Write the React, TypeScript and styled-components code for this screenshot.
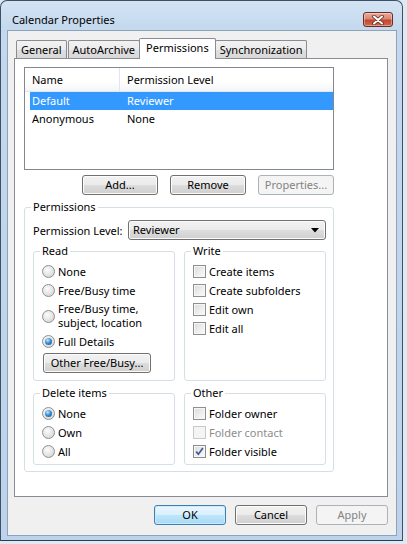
import React from "react";
import styled, { createGlobalStyle, css } from "styled-components";

const Global = createGlobalStyle`
  html, body { margin: 0; padding: 0; }
  body {
    background: #dfe9f4;
    font-family: "Noto Sans", "Open Sans", sans-serif;
    font-size: 11px;
    color: #000;
  }
  * { box-sizing: border-box; }
`;

const Window = styled.div`
  width: 403px;
  height: 541px;
  display: flex;
  flex-direction: column;
  border: 1px solid #3d5064;
  border-bottom-color: #2e3d4d;
  border-radius: 7px 7px 0 0;
  background: linear-gradient(180deg, #d3e3f3 0px, #c3d8ee 30px, #bcd3eb 100%);
  padding: 0 5px 4px 6px;
`;

const TitleBar = styled.div`
  height: 29px;
  flex: none;
  display: flex;
  align-items: center;
  padding: 8px 4px 0 5px;
`;

const Title = styled.div`
  flex: 1;
  font-size: 11px;
  line-height: 14px;
  color: #000;
`;

const CloseButton = styled.div`
  width: 30px;
  height: 15px;
  border: 1px solid #6b2c22;
  border-radius: 3px;
  background: linear-gradient(180deg, #e9a99b 0%, #d98875 45%, #c2452f 55%, #cf6a4f 100%);
  box-shadow: inset 0 0 0 1px rgba(255, 255, 255, 0.35);
  display: flex;
  align-items: center;
  justify-content: center;
`;

const Client = styled.div`
  flex: 1;
  display: flex;
  flex-direction: column;
  background: #f0f0f0;
  border: 1px solid #8ea3ba;
  padding: 7px 8px 10px 6px;
`;

const TabStrip = styled.div`
  display: flex;
  align-items: flex-end;
  height: 21px;
  margin-bottom: -1px;
  padding-left: 2px;
  flex: none;
`;

const Tab = styled.div<{ $active?: boolean }>`
  height: 19px;
  padding: 0 4px;
  margin-right: 1px;
  border: 1px solid #898c95;
  border-bottom: none;
  border-radius: 2px 2px 0 0;
  background: linear-gradient(180deg, #f2f2f2 0%, #ebebeb 50%, #dedede 51%, #d8d8d8 100%);
  line-height: 17px;
  white-space: nowrap;
  ${(p) =>
    p.$active &&
    css`
      height: 21px;
      margin: 0 -1px 0 -2px;
      padding: 0 6px 0 6px;
      background: #ffffff;
      line-height: 18px;
      position: relative;
      z-index: 1;
    `}
`;

const Panel = styled.div`
  flex: 1;
  background: #ffffff;
  border: 1px solid #898c95;
  padding: 8px 9px 0 9px;
  display: flex;
  flex-direction: column;
`;

const ListBox = styled.div`
  width: 310px;
  height: 103px;
  border: 1px solid #828790;
  background: #fff;
  padding-left: 5px;
  flex: none;
`;

const ListHeader = styled.div`
  display: grid;
  grid-template-columns: 90px 1fr;
  height: 24px;
  margin-left: -5px;
  padding-left: 5px;
  background: linear-gradient(180deg, #ffffff 0%, #ffffff 60%, #f4f5f7 100%);
  border-bottom: 1px solid #e3e6ea;
`;

const HeaderCell = styled.div<{ $first?: boolean }>`
  line-height: 23px;
  padding-left: ${(p) => (p.$first ? "2px" : "7px")};
  ${(p) => p.$first && "border-right: 1px solid #e3e5e8;"}
`;

const ListRow = styled.div<{ $selected?: boolean }>`
  display: grid;
  grid-template-columns: 90px 1fr;
  height: 18px;
  line-height: 18px;
  background: ${(p) => (p.$selected ? "#3399ff" : "transparent")};
  color: ${(p) => (p.$selected ? "#ffffff" : "#000000")};
`;

const RowCell = styled.div<{ $first?: boolean }>`
  padding-left: ${(p) => (p.$first ? "2px" : "7px")};
`;

const ButtonRow = styled.div`
  width: 310px;
  display: flex;
  justify-content: flex-end;
  gap: 12px;
  margin-top: 5px;
  flex: none;
`;

const Button = styled.div<{ $w?: number; $disabled?: boolean; $default?: boolean }>`
  width: ${(p) => p.$w ?? 76}px;
  height: 20px;
  border: 1px solid #707070;
  border-radius: 3px;
  background: linear-gradient(180deg, #f2f2f2 0%, #ebebeb 50%, #dddddd 51%, #cfcfcf 100%);
  box-shadow: inset 0 0 0 1px #fcfcfc;
  display: flex;
  align-items: center;
  justify-content: center;
  line-height: 16px;
  color: #000;
  flex: none;
  ${(p) =>
    p.$default &&
    css`
      border-color: #3c7fb1;
      background: linear-gradient(180deg, #eaf6fd 0%, #d9f0fc 50%, #bee6fd 51%, #a7d9f5 100%);
      box-shadow: inset 0 0 0 1px #cfeafc;
    `}
  ${(p) =>
    p.$disabled &&
    css`
      border-color: #adb2b5;
      background: #f4f4f4;
      box-shadow: none;
      color: #838383;
    `}
`;

const Group = styled.fieldset`
  margin: 0;
  min-width: 0;
  border: 1px solid #d5dfe5;
  border-radius: 3px;
  padding: 0 7px 6px 8px;
`;

const OuterGroup = styled(Group)`
  width: 310px;
  margin-top: 4px;
  flex: none;
`;

const SubGroup = styled(Group)`
  padding: 3px 6px 3px 8px;
  display: flex;
  flex-direction: column;
`;

const Legend = styled.legend`
  padding: 0 2px;
  margin-left: -2px;
  line-height: 16px;
  font-size: 11px;
`;

const LevelRow = styled.div`
  display: flex;
  align-items: center;
  height: 20px;
  margin-top: 5px;
`;

const Select = styled.div`
  margin-left: auto;
  width: 198px;
  height: 20px;
  border: 1px solid #707070;
  border-radius: 3px;
  background: linear-gradient(180deg, #f2f2f2 0%, #ebebeb 50%, #dddddd 51%, #cfcfcf 100%);
  box-shadow: inset 0 0 0 1px #fcfcfc;
  display: flex;
  align-items: center;
  justify-content: space-between;
  padding: 0 6px 0 4px;
  line-height: 16px;
`;

const SubGrid = styled.div`
  display: grid;
  grid-template-columns: 142px 142px;
  column-gap: 9px;
  row-gap: 4px;
  margin-top: 3px;
`;

const OptionRow = styled.div<{ $tall?: boolean; $disabled?: boolean }>`
  display: flex;
  align-items: center;
  gap: 3px;
  height: ${(p) => (p.$tall ? 32 : 19)}px;
  line-height: ${(p) => (p.$tall ? 14 : 19)}px;
  color: ${(p) => (p.$disabled ? "#8d8d8d" : "#000")};
`;

const RadioCircle = styled.span<{ $on?: boolean }>`
  width: 13px;
  height: 13px;
  border-radius: 50%;
  border: 1px solid #8f9090;
  background: radial-gradient(circle at 40% 35%, #fbfbfb 0%, #e6e6e6 50%, #cdcdcd 100%);
  display: flex;
  align-items: center;
  justify-content: center;
  flex: none;
  &::after {
    content: "";
    display: ${(p) => (p.$on ? "block" : "none")};
    width: 7px;
    height: 7px;
    border-radius: 50%;
    background: radial-gradient(circle at 38% 32%, #c3ecff 0%, #3a8fd6 45%, #0c4a8c 100%);
  }
`;

const CheckBox = styled.span<{ $disabled?: boolean }>`
  width: 13px;
  height: 13px;
  border: 1px solid ${(p) => (p.$disabled ? "#c9c9c9" : "#8e8f8f")};
  background: ${(p) =>
    p.$disabled ? "#f4f4f4" : "linear-gradient(135deg, #dadada 0%, #efefef 60%, #fbfbfb 100%)"};
  box-shadow: inset 0 0 0 1px ${(p) => (p.$disabled ? "#f4f4f4" : "#f6f6f6")};
  display: flex;
  align-items: center;
  justify-content: center;
  flex: none;
`;

const SmallButtonWrap = styled.div`
  margin: 2px 0 4px 1px;
`;

const DialogButtons = styled.div`
  display: flex;
  justify-content: flex-end;
  gap: 9px;
  margin-top: 8px;
  flex: none;
`;

const Radio = ({ on, children, tall }: { on?: boolean; children: React.ReactNode; tall?: boolean }) => (
  <OptionRow $tall={tall}>
    <RadioCircle $on={on} />
    <span>{children}</span>
  </OptionRow>
);

const Check = ({ checked, disabled, children }: { checked?: boolean; disabled?: boolean; children: React.ReactNode }) => (
  <OptionRow $disabled={disabled}>
    <CheckBox $disabled={disabled}>
      {checked && (
        <svg width="9" height="9" viewBox="0 0 9 9">
          <path d="M1.2 4.6 L3.4 7.2 L7.9 1" fill="none" stroke="#3f5a99" strokeWidth="1.7" />
        </svg>
      )}
    </CheckBox>
    <span>{children}</span>
  </OptionRow>
);

export default function App() {
  return (
    <>
      <Global />
      <Window>
        <TitleBar>
          <Title>Calendar Properties</Title>
          <CloseButton>
            <svg width="12" height="10" viewBox="0 0 12 10">
              <path d="M2 1.5 L10 8.5 M10 1.5 L2 8.5" stroke="#5a2a22" strokeWidth="3.6" strokeLinecap="round" />
              <path d="M2 1.5 L10 8.5 M10 1.5 L2 8.5" stroke="#ffffff" strokeWidth="2" strokeLinecap="round" />
            </svg>
          </CloseButton>
        </TitleBar>
        <Client>
          <TabStrip>
            <Tab>General</Tab>
            <Tab>AutoArchive</Tab>
            <Tab $active>Permissions</Tab>
            <Tab>Synchronization</Tab>
          </TabStrip>
          <Panel>
            <ListBox>
              <ListHeader>
                <HeaderCell $first>Name</HeaderCell>
                <HeaderCell>Permission Level</HeaderCell>
              </ListHeader>
              <ListRow $selected>
                <RowCell $first>Default</RowCell>
                <RowCell>Reviewer</RowCell>
              </ListRow>
              <ListRow>
                <RowCell $first>Anonymous</RowCell>
                <RowCell>None</RowCell>
              </ListRow>
            </ListBox>
            <ButtonRow>
              <Button>Add...</Button>
              <Button>Remove</Button>
              <Button $disabled>Properties...</Button>
            </ButtonRow>
            <OuterGroup>
              <Legend>Permissions</Legend>
              <LevelRow>
                <span>Permission Level:</span>
                <Select>
                  <span>Reviewer</span>
                  <svg width="8" height="5" viewBox="0 0 8 5">
                    <path d="M0 0 H8 L4 4.5 Z" fill="#000" />
                  </svg>
                </Select>
              </LevelRow>
              <SubGrid>
                <SubGroup>
                  <Legend>Read</Legend>
                  <Radio>None</Radio>
                  <Radio>Free/Busy time</Radio>
                  <Radio tall>
                    Free/Busy time,
                    <br />
                    subject, location
                  </Radio>
                  <Radio on>Full Details</Radio>
                  <SmallButtonWrap>
                    <Button $w={108}>Other Free/Busy...</Button>
                  </SmallButtonWrap>
                </SubGroup>
                <SubGroup>
                  <Legend>Write</Legend>
                  <Check>Create items</Check>
                  <Check>Create subfolders</Check>
                  <Check>Edit own</Check>
                  <Check>Edit all</Check>
                </SubGroup>
                <SubGroup>
                  <Legend>Delete items</Legend>
                  <Radio on>None</Radio>
                  <Radio>Own</Radio>
                  <Radio>All</Radio>
                </SubGroup>
                <SubGroup>
                  <Legend>Other</Legend>
                  <Check>Folder owner</Check>
                  <Check disabled>Folder contact</Check>
                  <Check checked>Folder visible</Check>
                </SubGroup>
              </SubGrid>
            </OuterGroup>
          </Panel>
          <DialogButtons>
            <Button $w={72} $default>OK</Button>
            <Button $w={72}>Cancel</Button>
            <Button $w={72} $disabled>Apply</Button>
          </DialogButtons>
        </Client>
      </Window>
    </>
  );
}
